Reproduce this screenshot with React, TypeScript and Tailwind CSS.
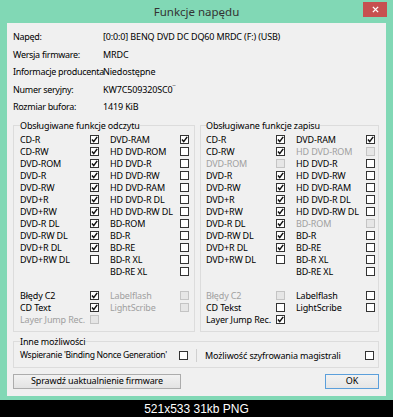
type State = "on" | "off" | "dis";

const readLeft: [string, State][] = [
  ["CD-R", "on"],
  ["CD-RW", "on"],
  ["DVD-ROM", "on"],
  ["DVD-R", "on"],
  ["DVD-RW", "on"],
  ["DVD+R", "on"],
  ["DVD+RW", "on"],
  ["DVD-R DL", "on"],
  ["DVD-RW DL", "on"],
  ["DVD+R DL", "on"],
  ["DVD+RW DL", "off"],
];

const readRight: [string, State][] = [
  ["DVD-RAM", "on"],
  ["HD DVD-ROM", "off"],
  ["HD DVD-R", "off"],
  ["HD DVD-RW", "off"],
  ["HD DVD-RAM", "off"],
  ["HD DVD-R DL", "off"],
  ["HD DVD-RW DL", "off"],
  ["BD-ROM", "off"],
  ["BD-R", "off"],
  ["BD-RE", "off"],
  ["BD-R XL", "off"],
  ["BD-RE XL", "off"],
];

const writeLeft: [string, State][] = [
  ["CD-R", "on"],
  ["CD-RW", "on"],
  ["DVD-ROM", "dis"],
  ["DVD-R", "on"],
  ["DVD-RW", "on"],
  ["DVD+R", "on"],
  ["DVD+RW", "on"],
  ["DVD-R DL", "on"],
  ["DVD-RW DL", "on"],
  ["DVD+R DL", "on"],
  ["DVD+RW DL", "off"],
];

const writeRight: [string, State][] = [
  ["DVD-RAM", "on"],
  ["HD DVD-ROM", "dis"],
  ["HD DVD-R", "off"],
  ["HD DVD-RW", "off"],
  ["HD DVD-RAM", "off"],
  ["HD DVD-R DL", "off"],
  ["HD DVD-RW DL", "off"],
  ["BD-ROM", "dis"],
  ["BD-R", "off"],
  ["BD-RE", "off"],
  ["BD-R XL", "off"],
  ["BD-RE XL", "off"],
];

const info = [
  ["Napęd:", "[0:0:0] BENQ DVD DC DQ60 MRDC (F:) (USB)"],
  ["Wersja firmware:", "MRDC"],
  ["Informacje producenta", "Niedostępne"],
  ["Numer seryjny:", "KW7C509320SC0"],
  ["Rozmiar bufora:", "1419 KiB"],
];

function Box({ state }: { state: State }) {
  if (state === "dis") {
    return <span className="block h-[9px] w-[9px] shrink-0 border border-[#c4c4c4] bg-[#e6e6e6]" />;
  }
  return (
    <span className="flex h-[9px] w-[9px] shrink-0 items-center justify-center border border-[#333333] bg-white">
      {state === "on" && (
        <svg viewBox="0 0 7 7" className="h-[7px] w-[7px]">
          <path d="M1 3.6 L2.7 5.6 L6.2 0.9" stroke="#111" strokeWidth="1.5" fill="none" />
        </svg>
      )}
    </span>
  );
}

function Item({ item }: { item?: [string, State] }) {
  if (!item) return <div />;
  const [label, state] = item;
  return (
    <div className="flex h-3 items-center justify-between">
      <span className={state === "dis" ? "text-[#a0a0a0]" : "text-black"}>{label}</span>
      <Box state={state} />
    </div>
  );
}

function Group({
  title,
  left,
  right,
  extraLeft,
  extraRight,
  className,
}: {
  title: string;
  left: [string, State][];
  right: [string, State][];
  extraLeft: [string, State][];
  extraRight: [string, State][];
  className: string;
}) {
  const rows = Array.from({ length: 12 }, (_, i) => i);
  return (
    <fieldset className={`border border-[#dcdcdc] pb-[5px] pt-[2px] ${className}`}>
      <legend className="leading-3">{title}</legend>
      <div className="grid grid-cols-[79px_79px] gap-x-[11px]">
        {rows.map((i) => (
          <div key={i} className="contents">
            <Item item={left[i]} />
            <Item item={right[i]} />
          </div>
        ))}
        <div className="h-3" />
        <div className="h-3" />
        {[0, 1, 2].map((i) => (
          <div key={"x" + i} className="contents">
            <Item item={extraLeft[i]} />
            <Item item={extraRight[i]} />
          </div>
        ))}
      </div>
    </fieldset>
  );
}

export default function App() {
  return (
    <div className="w-[393px] bg-black font-['Noto_Sans',sans-serif]">
      <div className="bg-[#81d8b5] px-[7px] pb-[4px]">
        <div className="-mx-[7px] grid h-[23px] grid-cols-[1fr_auto_1fr] items-start">
          <div />
          <div className="pt-[4px] text-[11.5px] leading-4 text-[#333333]">Funkcje napędu</div>
          <div className="flex justify-end pr-[6px] pt-[2px]">
            <div className="flex h-[15px] w-[24px] items-center justify-center bg-[#c75050]">
              <svg viewBox="0 0 8 8" className="h-[7px] w-[7px]">
                <path d="M1 1 L7 7 M7 1 L1 7" stroke="#fff" strokeWidth="1.6" />
              </svg>
            </div>
          </div>
        </div>
        <div className="bg-[#f0f0f0] pl-[6px] pr-[7px] pt-[5px] pb-[7px] text-[9px] tracking-[-0.15px] text-black">
          <div className="flex flex-col">
            {info.map(([k, v]) => (
              <div key={k} className="flex h-[17.5px] items-center whitespace-nowrap">
                <span className="w-[90px] shrink-0 tracking-[-0.3px]">{k}</span>
                <span>
                  {v}
                  {k === "Numer seryjny:" && <sup className="text-[6px]">¯</sup>}
                </span>
              </div>
            ))}
          </div>
          <div className="mt-[4px] flex gap-[5px]">
            <Group
              title="Obsługiwane funkcje odczytu"
              left={readLeft}
              right={readRight}
              extraLeft={[
                ["Błędy C2", "on"],
                ["CD Text", "on"],
                ["Layer Jump Rec.", "dis"],
              ]}
              extraRight={[
                ["Labelflash", "dis"],
                ["LightScribe", "dis"],
              ]}
              className="w-[182px] pl-[6px]"
            />
            <Group
              title="Obsługiwane funkcje zapisu"
              left={writeLeft}
              right={writeRight}
              extraLeft={[
                ["Błędy C2", "dis"],
                ["CD Tekst", "off"],
                ["Layer Jump Rec.", "on"],
              ]}
              extraRight={[
                ["Labelflash", "off"],
                ["LightScribe", "off"],
              ]}
              className="w-[179px] pl-[5px]"
            />
          </div>
          <fieldset className="mt-[4px] border border-[#dcdcdc] pl-[6px] pr-[4px] pb-[5px] pt-[2px]">
            <legend className="leading-3">Inne możliwości</legend>
            <div className="flex h-3 items-center">
              <span className="w-[159px] whitespace-nowrap text-[8.6px] tracking-[-0.3px]">
                Wspieranie 'Binding Nonce Generation'
              </span>
              <Box state="off" />
              <span className="mx-[8px] h-[13px] w-px bg-[#d0d0d0]" />
              <span className="flex-1 whitespace-nowrap">Możliwość szyfrowania magistrali</span>
              <Box state="off" />
            </div>
          </fieldset>
          <div className="mt-[6px] flex justify-between">
            <button className="h-[15px] w-[168px] border border-[#acacac] bg-gradient-to-b from-[#f2f2f2] to-[#e3e3e3] text-[9px] leading-3">
              Sprawdź uaktualnienie firmware
            </button>
            <button className="h-[15px] w-[54px] border border-[#5b9fdb] bg-gradient-to-b from-[#f2f2f2] to-[#e5e5e5] text-[9px] leading-3">
              OK
            </button>
          </div>
        </div>
      </div>
      <div className="flex h-[18px] items-center justify-center font-['Liberation_Sans',sans-serif] text-[12px] text-white">
        521x533 31kb PNG
      </div>
    </div>
  );
}
